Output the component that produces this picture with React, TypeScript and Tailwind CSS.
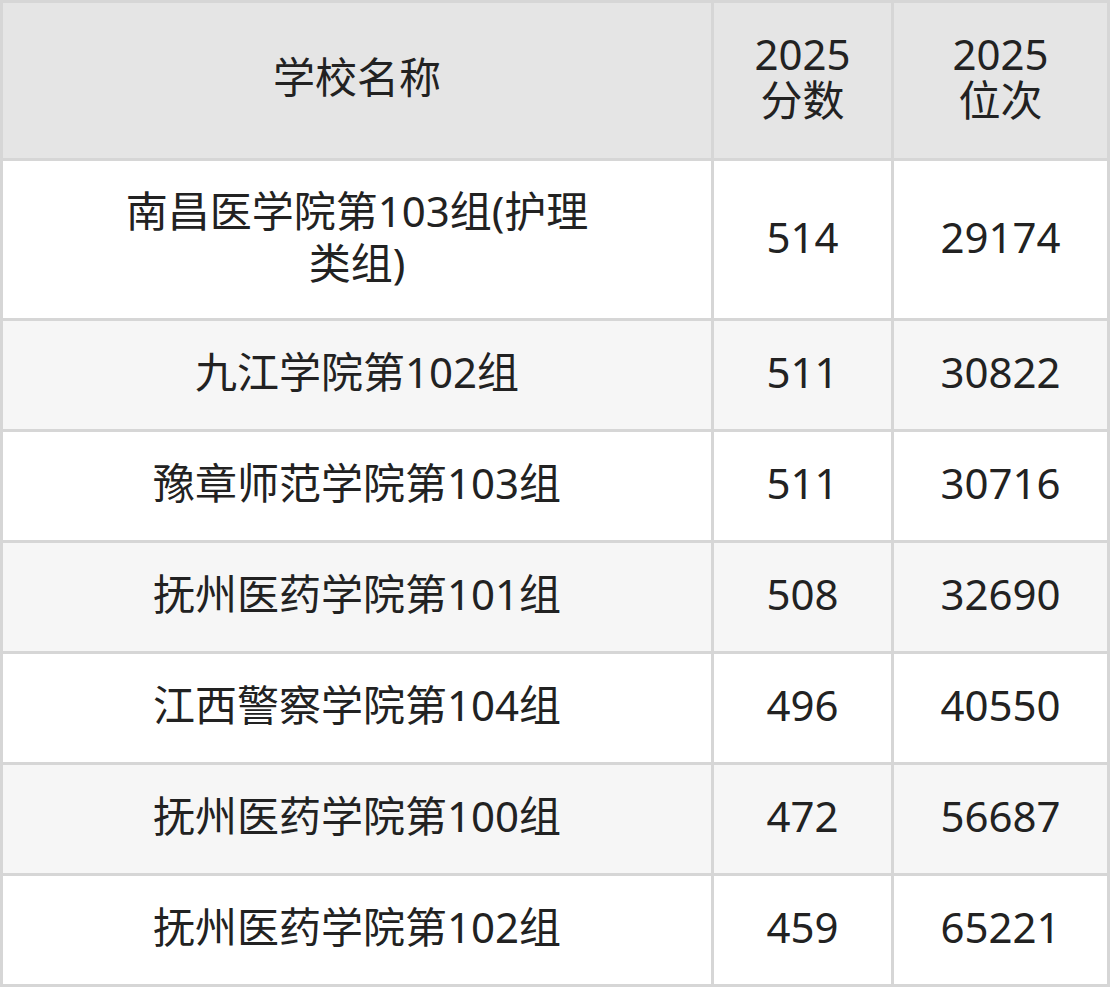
import React from 'react';

interface Row {
  school: string;
  score: string;
  rank: string;
}

const rows: Row[] = [
  { school: '南昌医学院第103组(护理类组)', score: '514', rank: '29174' },
  { school: '九江学院第102组', score: '511', rank: '30822' },
  { school: '豫章师范学院第103组', score: '511', rank: '30716' },
  { school: '抚州医药学院第101组', score: '508', rank: '32690' },
  { school: '江西警察学院第104组', score: '496', rank: '40550' },
  { school: '抚州医药学院第100组', score: '472', rank: '56687' },
  { school: '抚州医药学院第102组', score: '459', rank: '65221' },
];

const font = { fontFamily: '"Noto Sans", "Noto Sans CJK SC", sans-serif' };

const App: React.FC = () => {
  return (
    <div
      className="w-[1110px] h-[987px] bg-[#d6d6d6] p-[3px] grid grid-cols-[708px_177px_213px] grid-rows-[155px_157px_repeat(6,108px)] gap-[3px] text-[42px] text-[#222222]"
      style={font}
    >
      {/* Header */}
      <HeadCell>学校名称</HeadCell>
      <HeadCell>
        2025
        <br />
        分数
      </HeadCell>
      <HeadCell>
        2025
        <br />
        位次
      </HeadCell>

      {rows.map((r, i) => {
        const bg = i % 2 === 0 ? 'bg-white' : 'bg-[#f6f6f6]';
        return (
          <React.Fragment key={i}>
            <div className={`${bg} flex items-center justify-center text-center px-[115px] pb-[6px] leading-[52px]`}>
              {r.school}
            </div>
            <div className={`${bg} flex items-center justify-center pb-[6px] leading-[52px]`}>{r.score}</div>
            <div className={`${bg} flex items-center justify-center pb-[6px] leading-[52px]`}>{r.rank}</div>
          </React.Fragment>
        );
      })}
    </div>
  );
};

const HeadCell: React.FC<{ children: React.ReactNode }> = ({ children }) => (
  <div className="bg-[#e5e5e5] flex items-center justify-center text-center pb-[8px] leading-[46px]">
    <div>{children}</div>
  </div>
);

export default App;
